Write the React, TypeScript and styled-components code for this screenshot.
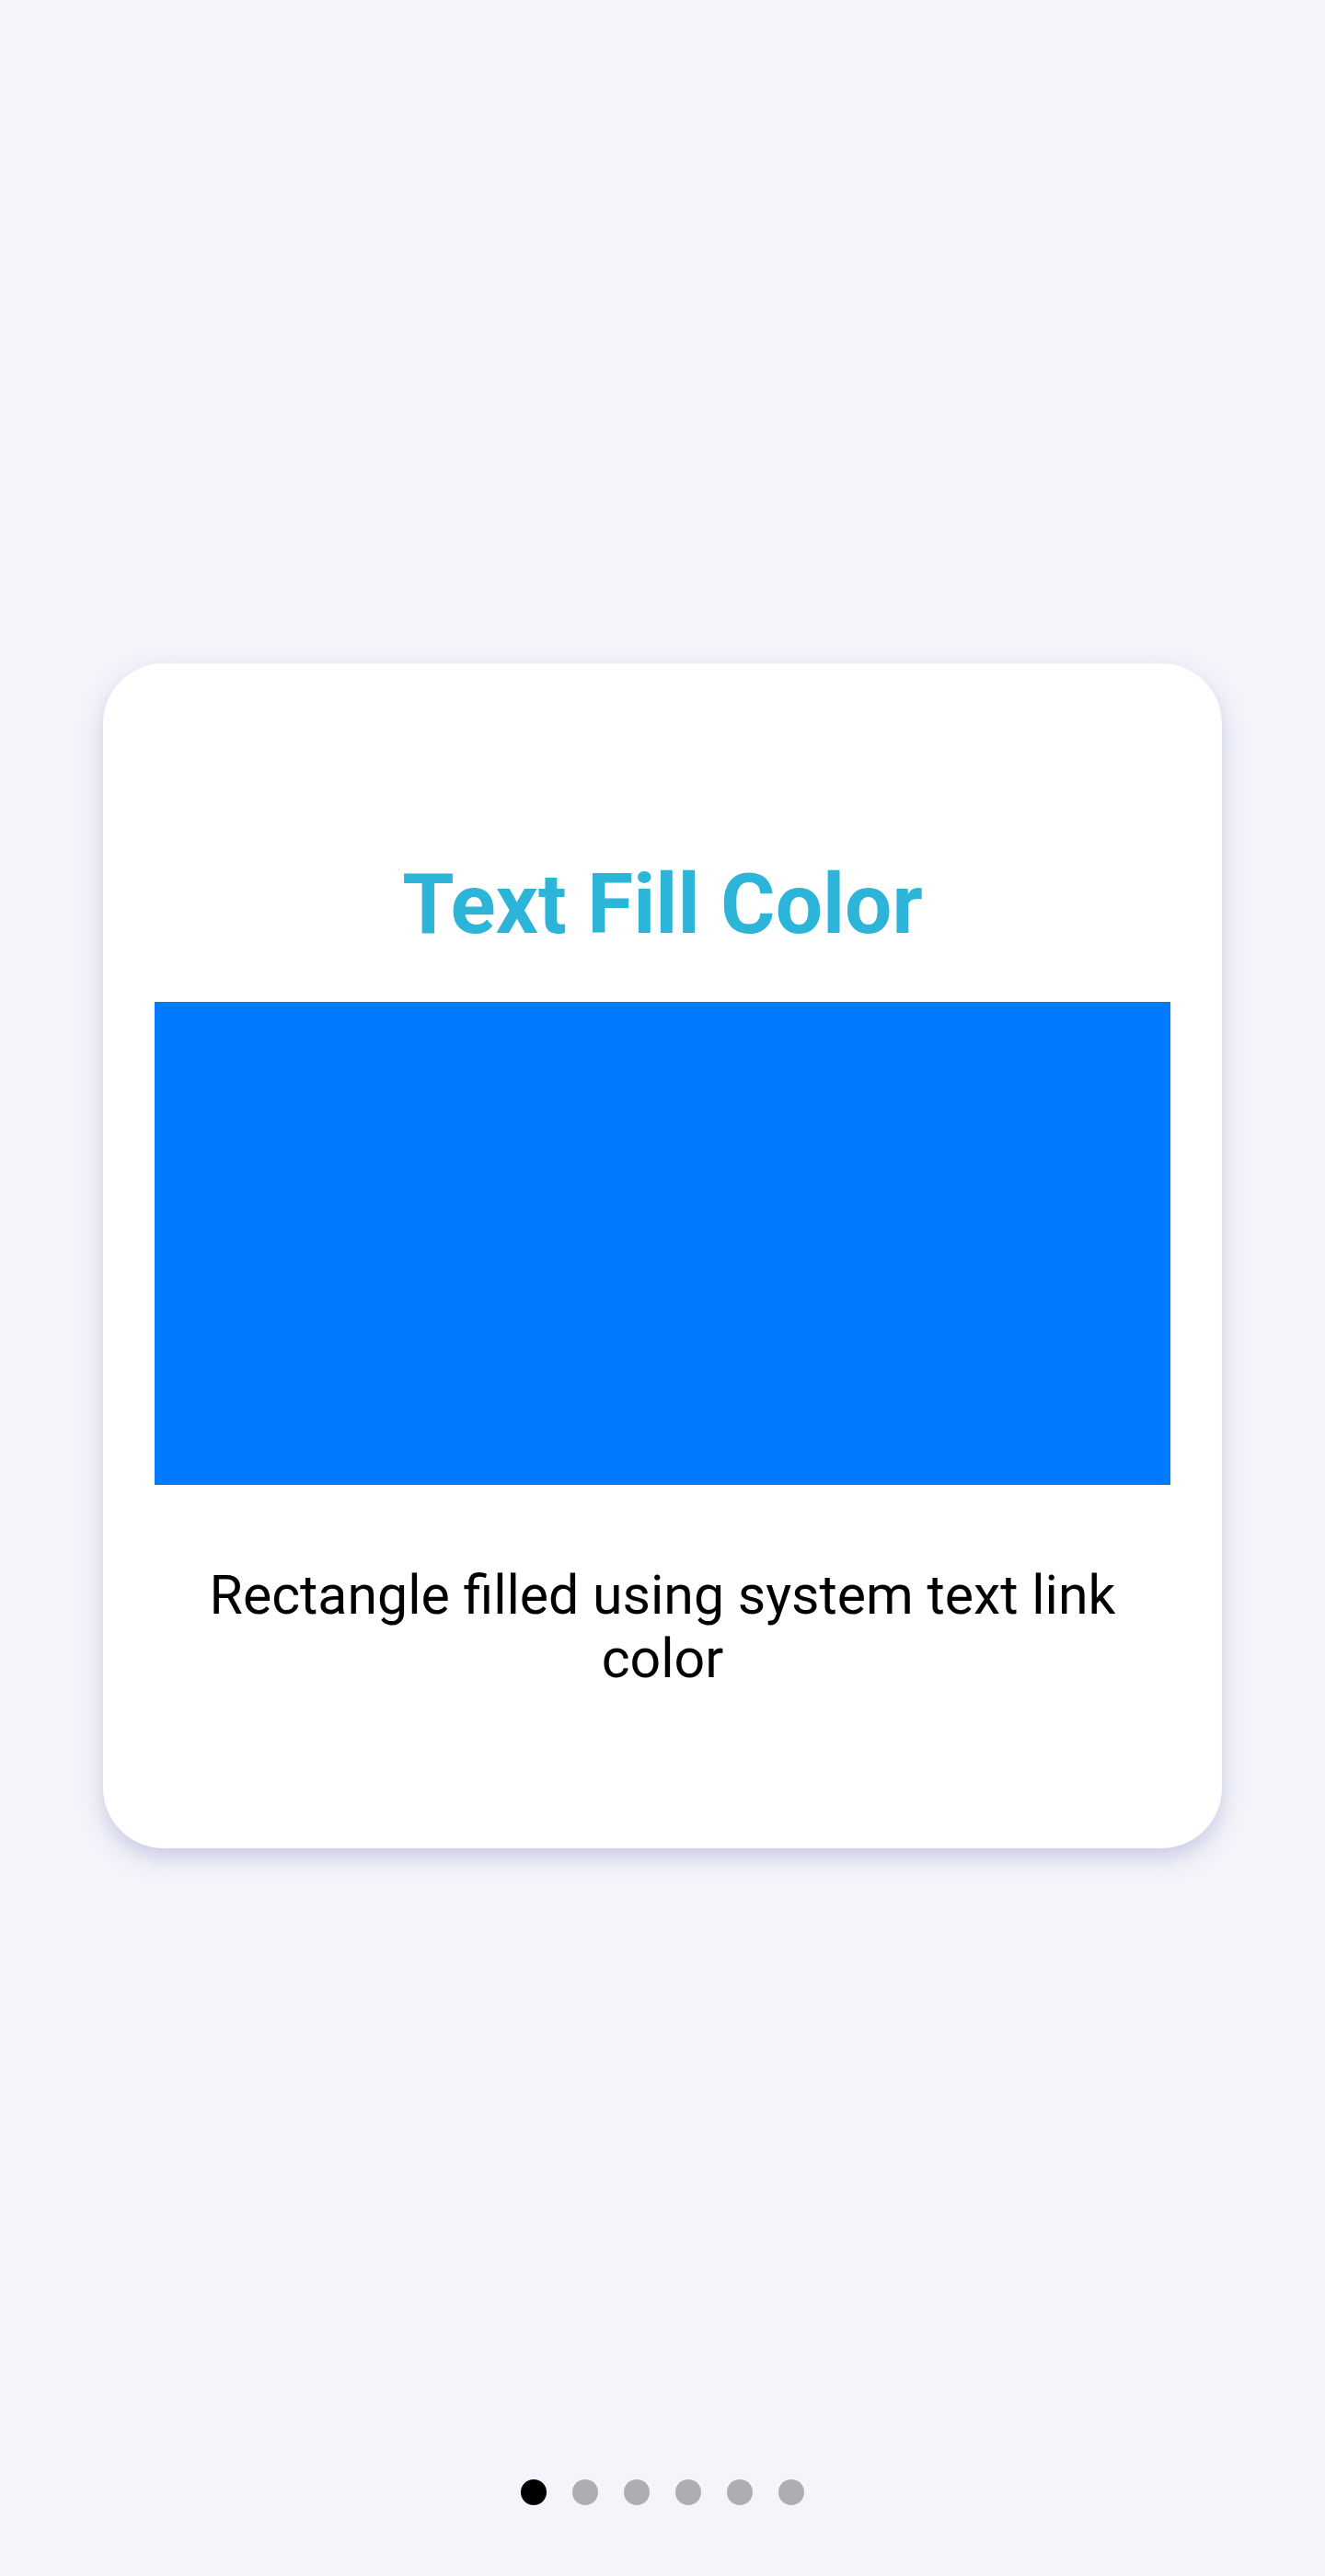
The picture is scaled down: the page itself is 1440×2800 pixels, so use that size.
import styled, { createGlobalStyle } from "styled-components";

const GlobalStyle = createGlobalStyle`
  html, body {
    margin: 0;
    padding: 0;
    background: #f4f5fa;
    font-family: Roboto, "Liberation Sans", sans-serif;
  }
`;

const PAGES = 6;

export default function App() {
  const active = 0;
  return (
    <Screen>
      <GlobalStyle />
      <Stage>
        <Card>
          <Title>Text Fill Color</Title>
          <Swatch />
          <Caption>Rectangle filled using system text link color</Caption>
        </Card>
      </Stage>
      <Pager>
        {Array.from({ length: PAGES }).map((_, i) => (
          <Dot key={i} $active={i === active} />
        ))}
      </Pager>
    </Screen>
  );
}

const Screen = styled.div`
  min-height: 2800px;
  display: flex;
  flex-direction: column;
  box-sizing: border-box;
`;

const Stage = styled.main`
  flex: 1;
  padding: 721px 112px 0;
  display: flex;
  flex-direction: column;
  align-items: stretch;
`;

const Card = styled.section`
  height: 1288px;
  box-sizing: border-box;
  background: #ffffff;
  border-radius: 66px;
  box-shadow: 0 10px 24px rgba(120, 120, 190, 0.35);
  padding: 209px 56px 0;
  display: flex;
  flex-direction: column;
  align-items: stretch;
`;

const Title = styled.h1`
  margin: 0;
  font-size: 91px;
  line-height: 107px;
  font-weight: 700;
  color: #2cb4d9;
  text-align: center;
`;

const Swatch = styled.div`
  margin-top: 52px;
  height: 525px;
  background: #007aff;
`;

const Caption = styled.p`
  margin: 85px 0 0;
  font-size: 59px;
  line-height: 69px;
  font-weight: 400;
  color: #000000;
  text-align: center;
`;

const Pager = styled.nav`
  display: flex;
  justify-content: center;
  gap: 28px;
  padding-bottom: 77px;
`;

const Dot = styled.span<{ $active: boolean }>`
  width: 28px;
  height: 28px;
  border-radius: 50%;
  background: ${(p) => (p.$active ? "#000000" : "#aeaeb2")};
`;
